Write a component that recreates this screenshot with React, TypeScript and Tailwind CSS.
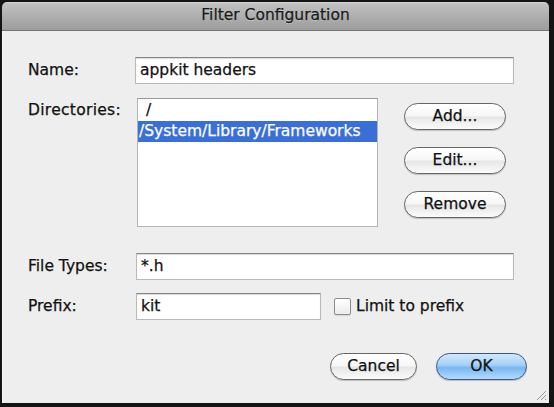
import React from "react";

const font = "font-['DejaVu_Sans',sans-serif] [-webkit-text-stroke:0.25px_currentColor]";

function AquaButton({ label, w, primary }: { label: string; w: string; primary?: boolean }) {
  return (
    <div
      className={
        "h-[27px] rounded-full border flex items-center justify-center text-[15.5px] text-[#111] shadow-[0_1px_1px_rgba(0,0,0,0.2)] " +
        w +
        (primary
          ? " border-[#3a5680] bg-[linear-gradient(to_bottom,#d2e9fd_0%,#a4cff8_45%,#78b6f2_55%,#b4dcfc_100%)]"
          : " border-[#666666] bg-[linear-gradient(to_bottom,#ffffff_0%,#f7f7f7_48%,#e6e6e6_52%,#fbfbfb_100%)]")
      }
    >
      {label}
    </div>
  );
}

function TextField({ value, w }: { value: string; w: string }) {
  return (
    <div
      className={
        "h-[27px] bg-white border border-[#b9b9b9] border-t-[#858585] shadow-[inset_0_1px_1px_rgba(0,0,0,0.15)] flex items-center pl-[4px] text-[15.5px] text-[#111] " +
        w
      }
    >
      {value}
    </div>
  );
}

export default function App() {
  return (
    <div className={"w-[554px] h-[407px] bg-[#141414] " + font}>
      <div className="ml-[2px] pt-[2px] w-[547px] h-[403px] flex flex-col">
        <div className="h-[29px] rounded-t-[5px] border-b border-[#747474] bg-[linear-gradient(to_bottom,#d4d4d4_0%,#c0c0c0_8%,#ababab_60%,#9d9d9d_100%)] flex items-center justify-center text-[15.5px] text-[#1a1a1a] [text-shadow:0_1px_0_rgba(255,255,255,0.4)]">
          Filter Configuration
        </div>
        <div className="flex-1 bg-[#eeeeee] border-l border-[#fafafa] pl-[25px] flex flex-col relative">
          {/* Name */}
          <div className="flex items-center mt-[26px]">
            <div className="w-[107px] text-[15.5px] text-[#111]">Name:</div>
            <TextField value="appkit headers" w="w-[379px]" />
          </div>
          {/* Directories */}
          <div className="flex mt-[14px]">
            <div className="w-[109px] pt-[1px] text-[15.5px] text-[#111] tracking-[0.3px]">Directories:</div>
            <div className="w-[241px] h-[129px] bg-white border border-[#b4b4b4] border-t-[#9a9a9a] pt-[1px] text-[15.5px]">
              <div className="h-[21px] flex items-center pl-[8px] text-[#111]">/</div>
              <div className="h-[21px] flex items-center pl-[1px] bg-[#3a6fd8] text-white">/System/Library/Frameworks</div>
            </div>
            <div className="ml-[26px] mt-[5px] flex flex-col gap-[17px]">
              <AquaButton label="Add..." w="w-[102px]" />
              <AquaButton label="Edit..." w="w-[102px]" />
              <AquaButton label="Remove" w="w-[102px]" />
            </div>
          </div>
          {/* File Types */}
          <div className="flex items-center mt-[26px]">
            <div className="w-[108px] text-[15.5px] text-[#111]">File Types:</div>
            <TextField value="*.h" w="w-[378px]" />
          </div>
          {/* Prefix */}
          <div className="flex items-center mt-[13px]">
            <div className="w-[108px] text-[15.5px] text-[#111]">Prefix:</div>
            <TextField value="kit" w="w-[185px]" />
            <div className="ml-[13px] w-[17px] h-[17px] rounded-[2px] border border-[#8c8c8c] bg-[linear-gradient(to_bottom,#ffffff,#ececec)] shadow-[0_1px_1px_rgba(0,0,0,0.1)]" />
            <div className="ml-[5px] text-[15.5px] text-[#111]">Limit to prefix</div>
          </div>
          {/* Buttons */}
          <div className="flex justify-end mt-[33px] pr-[22px] gap-[19px]">
            <AquaButton label="Cancel" w="w-[87px]" />
            <AquaButton label="OK" w="w-[91px]" primary />
          </div>
          <svg className="absolute right-[2px] bottom-[2px]" width="12" height="12" viewBox="0 0 12 12">
            <line x1="11" y1="2" x2="2" y2="11" stroke="#9a9a9a" strokeWidth="1" />
            <line x1="11" y1="6" x2="6" y2="11" stroke="#9a9a9a" strokeWidth="1" />
            <line x1="11" y1="10" x2="10" y2="11" stroke="#9a9a9a" strokeWidth="1" />
          </svg>
        </div>
      </div>
    </div>
  );
}
